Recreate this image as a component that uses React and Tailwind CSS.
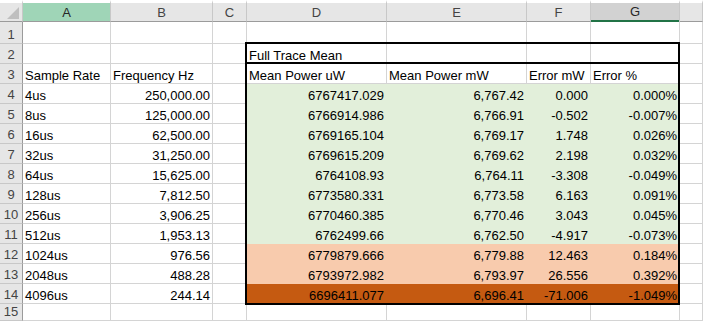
import React from "react";

const COLS = ["A", "B", "C", "D", "E", "F", "G", ""];

const rows = [
  ["4us", "250,000.00", "6767417.029", "6,767.42", "0.000", "0.000%", "g"],
  ["8us", "125,000.00", "6766914.986", "6,766.91", "-0.502", "-0.007%", "g"],
  ["16us", "62,500.00", "6769165.104", "6,769.17", "1.748", "0.026%", "g"],
  ["32us", "31,250.00", "6769615.209", "6,769.62", "2.198", "0.032%", "g"],
  ["64us", "15,625.00", "6764108.93", "6,764.11", "-3.308", "-0.049%", "g"],
  ["128us", "7,812.50", "6773580.331", "6,773.58", "6.163", "0.091%", "g"],
  ["256us", "3,906.25", "6770460.385", "6,770.46", "3.043", "0.045%", "g"],
  ["512us", "1,953.13", "6762499.66", "6,762.50", "-4.917", "-0.073%", "g"],
  ["1024us", "976.56", "6779879.666", "6,779.88", "12.463", "0.184%", "p"],
  ["2048us", "488.28", "6793972.982", "6,793.97", "26.556", "0.392%", "p"],
  ["4096us", "244.14", "6696411.077", "6,696.41", "-71.006", "-1.049%", "o"],
];

function ColHead({ label }) {
  if (label === "A") {
    return (
      <div className="border-t-[3px] border-r border-b border-t-white border-r-[#C8C8C8] border-b-[#9B9B9B] bg-[#9FD5B7] flex items-center justify-center text-[13px] text-[#262626] leading-[15px]">
        {label}
      </div>
    );
  }
  if (label === "G") {
    return (
      <div className="border-t-[3px] border-r border-t-white border-r-[#C8C8C8] bg-[#D2D2D2] flex flex-col">
        <div className="flex-1 flex items-center justify-center text-[13px] text-[#262626] leading-[15px]">{label}</div>
        <div className="h-[2px] bg-[#217346]" />
      </div>
    );
  }
  return (
    <div className="border-t-[3px] border-r border-b border-t-white border-r-[#C8C8C8] border-b-[#9B9B9B] bg-[#E6E6E6] flex items-center justify-center text-[13px] text-[#444444] leading-[15px]">
      {label}
    </div>
  );
}

function RowHead({ n }) {
  return (
    <div className="border-r border-b border-r-[#9B9B9B] border-b-[#C8C8C8] bg-[#E6E6E6] flex items-end justify-center text-[13px] text-[#444444] leading-[15px] pb-[1px]">
      {n}
    </div>
  );
}

function Cell({ children, right, fill }) {
  let cls = "border-r border-b border-[#D4D4D4] bg-white";
  if (fill === "g") cls = "border-r border-b border-[#E2EFDA] bg-[#E2EFDA]";
  if (fill === "p") cls = "border-r border-b border-[#F8CBAD] bg-[#F8CBAD]";
  if (fill === "o") cls = "border-r border-b border-[#C55A11] bg-[#C55A11]";
  return (
    <div
      className={
        cls +
        " flex items-end overflow-visible whitespace-nowrap text-[13px] leading-[15px] text-black " +
        (right ? "justify-end pr-[2px]" : "justify-start pl-[2px]")
      }
    >
      {children}
    </div>
  );
}

export default function App() {
  return (
    <div
      className="relative w-[703px] h-[321px] overflow-hidden bg-white"
      style={{ fontFamily: '"Liberation Sans", Arial, sans-serif' }}
    >
      <div className="grid h-full grid-cols-[23px_88px_102px_34px_140px_140px_64px_89px_1fr] grid-rows-[22px_22px_repeat(13,20px)_1fr]">
        {/* corner */}
        <div className="border-t-[3px] border-r border-b border-t-white border-r-[#C8C8C8] border-b-[#9B9B9B] bg-[#E6E6E6] relative">
          <svg className="absolute left-[7px] top-[4px]" width="12" height="12" viewBox="0 0 12 12">
            <polygon points="12,0 12,12 0,12" fill="#BFBFBF" />
          </svg>
        </div>
        {COLS.map((c, i) => (
          <ColHead key={i} label={c} />
        ))}

        {/* row 1 */}
        <RowHead n={1} />
        {COLS.map((c, i) => (
          <Cell key={"1-" + i} />
        ))}

        {/* row 2 */}
        <RowHead n={2} />
        <Cell />
        <Cell />
        <Cell />
        <Cell>Full Trace Mean</Cell>
        <Cell />
        <Cell />
        <Cell />
        <Cell />

        {/* row 3 */}
        <RowHead n={3} />
        <Cell>Sample Rate</Cell>
        <Cell>Frequency Hz</Cell>
        <Cell />
        <Cell>Mean Power uW</Cell>
        <Cell>Mean Power mW</Cell>
        <Cell>Error mW</Cell>
        <Cell>Error %</Cell>
        <Cell />

        {rows.map((r, i) => (
          <React.Fragment key={i}>
            <RowHead n={i + 4} />
            <Cell>{r[0]}</Cell>
            <Cell right>{r[1]}</Cell>
            <Cell />
            <Cell right fill={r[6]}>{r[2]}</Cell>
            <Cell right fill={r[6]}>{r[3]}</Cell>
            <Cell right fill={r[6]}>{r[4]}</Cell>
            <Cell right fill={r[6]}>{r[5]}</Cell>
            <Cell />
          </React.Fragment>
        ))}

        {/* row 15 */}
        <RowHead n={15} />
        {COLS.map((c, i) => (
          <Cell key={"15-" + i} />
        ))}
      </div>

      {/* thick outline around D2:G14 */}
      <div className="pointer-events-none absolute left-[245px] top-[42px] w-[435px] h-[263px] border-2 border-black" />
      <div className="pointer-events-none absolute left-[245px] top-[62px] w-[435px] h-[2px] bg-black" />
    </div>
  );
}
